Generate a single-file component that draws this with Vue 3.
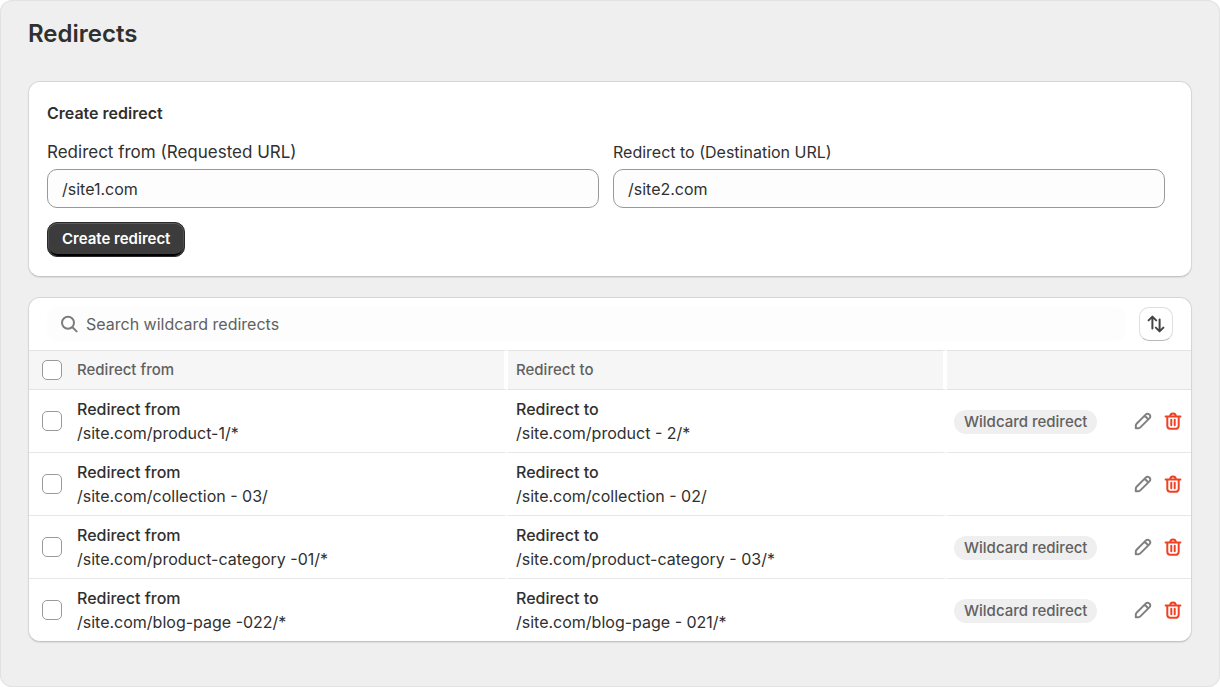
<script setup>
import { ref, computed } from 'vue'

const from = ref('/site1.com')
const to = ref('/site2.com')
const query = ref('')
const ascending = ref(true)
const selected = ref([])

const redirects = ref([
  { id: 1, from: '/site.com/product-1/*', to: '/site.com/product - 2/*', wildcard: true },
  { id: 2, from: '/site.com/collection - 03/', to: '/site.com/collection - 02/', wildcard: false },
  { id: 3, from: '/site.com/product-category -01/*', to: '/site.com/product-category - 03/*', wildcard: true },
  { id: 4, from: '/site.com/blog-page -022/*', to: '/site.com/blog-page - 021/*', wildcard: true }
])

const visible = computed(() => {
  const list = redirects.value.filter((r) => (r.from + r.to).includes(query.value))
  return ascending.value ? list : list.reverse()
})

const allSelected = computed({
  get: () => redirects.value.length > 0 && selected.value.length === redirects.value.length,
  set: (on) => { selected.value = on ? redirects.value.map((r) => r.id) : [] }
})

function create() {
  redirects.value.push({ id: Date.now(), from: from.value, to: to.value, wildcard: from.value.endsWith('*') })
}

function edit(row) {
  from.value = row.from
  to.value = row.to
}

function remove(id) {
  redirects.value = redirects.value.filter((r) => r.id !== id)
  selected.value = selected.value.filter((s) => s !== id)
}
</script>

<template>
  <main class="page">
    <h1 class="title">Redirects</h1>

    <form class="card create" @submit.prevent="create">
      <h2 class="subtitle">Create redirect</h2>
      <div class="fields">
        <div class="field">
          <label class="label wide" for="from">Redirect from (Requested URL)</label>
          <input id="from" v-model="from" class="text" type="text">
        </div>
        <div class="field">
          <label class="label" for="to">Redirect to (Destination URL)</label>
          <input id="to" v-model="to" class="text" type="text">
        </div>
      </div>
      <button class="primary" type="submit">Create redirect</button>
    </form>

    <section class="card list">
      <div class="toolbar">
        <div class="search">
          <svg class="glass" viewBox="0 0 18 18" aria-hidden="true">
            <circle cx="8" cy="7.8" r="6" />
            <path d="M12.4 12.2 16.6 16.4" />
          </svg>
          <input v-model="query" class="query" type="text" placeholder="Search wildcard redirects" aria-label="Search wildcard redirects">
        </div>
        <button class="sort" type="button" aria-label="Sort" @click="ascending = !ascending">
          <svg viewBox="0 0 20 20" aria-hidden="true">
            <path d="M6.4 14.6V3M2.6 6.4 6.4 2.6l3.8 3.8M13.6 5.4V17M9.8 13.6l3.8 3.8 3.8-3.8" />
          </svg>
        </button>
      </div>

      <table class="table">
        <colgroup>
          <col class="c-check"><col><col><col class="c-badge"><col class="c-actions">
        </colgroup>
        <thead>
          <tr>
            <th class="check"><input v-model="allSelected" type="checkbox" aria-label="Select all"></th>
            <th class="split">Redirect from</th>
            <th class="split">Redirect to</th>
            <th colspan="2"></th>
          </tr>
        </thead>
        <tbody>
          <tr v-for="row in visible" :key="row.id">
            <td class="check"><input v-model="selected" type="checkbox" :value="row.id" :aria-label="'Select ' + row.from"></td>
            <td class="split"><div class="name">Redirect from</div><div>{{ row.from }}</div></td>
            <td class="split"><div class="name">Redirect to</div><div>{{ row.to }}</div></td>
            <td><span v-if="row.wildcard" class="badge">Wildcard redirect</span></td>
            <td>
              <div class="actions">
                <button class="icon" type="button" aria-label="Edit" @click="edit(row)">
                  <svg viewBox="0 0 18 18" aria-hidden="true">
                    <path d="M1.8 16.2v-2.6a2.6 2.6 0 0 1 .8-1.9l9.3-9.3a2.3 2.3 0 0 1 3.3 0l.4.4a2.3 2.3 0 0 1 0 3.3l-9.3 9.3a2.6 2.6 0 0 1-1.9.8ZM10.8 3.8l3.4 3.4" />
                  </svg>
                </button>
                <button class="icon danger" type="button" aria-label="Delete" @click="remove(row.id)">
                  <svg viewBox="0 0 18 18" aria-hidden="true">
                    <path d="M1.6 4.4h14.8M6.2 4.2a2.8 2.8 0 0 1 5.6 0M3.3 4.4v9.4a3 3 0 0 0 3 3h5.4a3 3 0 0 0 3-3V4.4M7.3 7.8v5.4M10.7 7.8v5.4" />
                  </svg>
                </button>
              </div>
            </td>
          </tr>
        </tbody>
      </table>
    </section>
  </main>
</template>

<style>
body {
  background: #fff;
}
</style>

<style scoped>
.page {
  box-sizing: border-box;
  min-height: 100vh;
  padding: 18px 28px;
  border: 1px solid #e2e2e2;
  border-width: 1px 0;
  border-radius: 12px;
  background: #efefef;
  box-shadow: inset 1px 0 #e2e2e2, inset -1px 0 #e2e2e2;
  color: #303030;
  font-family: Inter, "Liberation Sans", sans-serif;
  font-size: 16px;
  line-height: 24px;
}

.title {
  margin: 0 0 32px;
  font-size: 24px;
  line-height: 30px;
  font-weight: 600;
}

.card {
  border: 1px solid #d6d6d6;
  border-bottom-color: #c4c4c4;
  border-radius: 12px;
  background: #fff;
  box-shadow: 0 1px 1px #dcdcdc;
}

.create {
  padding: 19px 26px 19px 18px;
  margin-bottom: 20px;
}

.subtitle {
  margin: 0 0 15px;
  font-size: 16px;
  line-height: 24px;
  font-weight: 600;
}

.fields {
  display: grid;
  grid-template-columns: 1fr 1fr;
  gap: 14px;
}

.label {
  display: block;
  margin-bottom: 5px;
}

.wide {
  font-size: 17px;
}

.text {
  box-sizing: border-box;
  display: block;
  width: 100%;
  height: 39px;
  padding: 0 14px;
  border: 1px solid #999;
  border-radius: 10px;
  background: #fdfdfd;
  color: inherit;
  font: inherit;
}

.primary {
  display: block;
  height: 35px;
  margin-top: 14px;
  padding: 0 14px 1px;
  border: 1px solid #2a2a2a;
  border-radius: 10px;
  background: #3c3c3c;
  box-shadow: inset 0 1px #5c5c5c, inset 1px 0 #505050, inset -1px 0 #505050, inset 0 -2px #000;
  color: #fff;
  font: inherit;
  font-size: 15px;
  font-weight: 600;
}

.list {
  overflow: hidden;
}

.toolbar {
  display: flex;
  align-items: center;
  gap: 14px;
  padding: 9px 18px;
}

.search {
  display: flex;
  flex: 1;
  align-items: center;
  gap: 8px;
  height: 34px;
  padding-left: 13px;
  border-radius: 10px;
  background: #fdfdfd;
}

.glass {
  width: 18px;
  height: 18px;
  fill: none;
  stroke: #7c7c7c;
  stroke-width: 2;
  stroke-linecap: round;
}

.query {
  flex: 1;
  padding: 0;
  border: 0;
  outline: 0;
  background: none;
  color: inherit;
  font: inherit;
}

.query::placeholder {
  color: #616161;
  opacity: 1;
}

.sort {
  display: grid;
  place-items: center;
  width: 34px;
  height: 34px;
  padding: 0;
  border: 1px solid #dedede;
  border-bottom-color: #b8b8b8;
  border-radius: 10px;
  background: #fff;
}

.sort svg {
  width: 20px;
  height: 20px;
  fill: none;
  stroke: #444;
  stroke-width: 2;
  stroke-linecap: round;
  stroke-linejoin: round;
}

.table {
  width: 100%;
  table-layout: fixed;
  border-collapse: separate;
  border-spacing: 0;
}

.c-check {
  width: 40px;
}

.c-badge {
  width: 178px;
}

.c-actions {
  width: 66px;
}

th {
  height: 38px;
  padding: 0 8px;
  border-top: 1px solid #e3e3e3;
  border-bottom: 1px solid #e3e3e3;
  background: #f6f6f6;
  color: #616161;
  font-size: 15px;
  font-weight: 500;
  text-align: left;
}

td {
  height: 62px;
  padding: 0 7px;
  border-bottom: 1px solid #e7e7e7;
}

tbody tr:last-child td {
  border-bottom: 0;
}

.split {
  padding: 0 8px;
  border-right: 4px solid #fff;
}

.check {
  padding: 0 0 0 13px;
}

.check input {
  appearance: none;
  display: block;
  width: 20px;
  height: 20px;
  margin: 0;
  border: 1px solid #999;
  border-radius: 5px;
  background: #fff;
}

.check input:checked {
  background: #303030;
}

.name {
  font-weight: 500;
}

.badge {
  display: inline-block;
  padding: 0 10px;
  border-radius: 12px;
  background: #efefef;
  color: #616161;
  font-size: 15px;
  font-weight: 500;
  white-space: nowrap;
}

.actions {
  display: flex;
  justify-content: flex-end;
  gap: 12px;
  padding-right: 2px;
}

.icon {
  display: block;
  width: 18px;
  height: 18px;
  padding: 0;
  border: 0;
  background: none;
}

.icon svg {
  display: block;
  width: 18px;
  height: 18px;
  fill: none;
  stroke: #808080;
  stroke-width: 2;
  stroke-linecap: round;
  stroke-linejoin: round;
}

.danger svg {
  stroke: #ef4123;
}
</style>
